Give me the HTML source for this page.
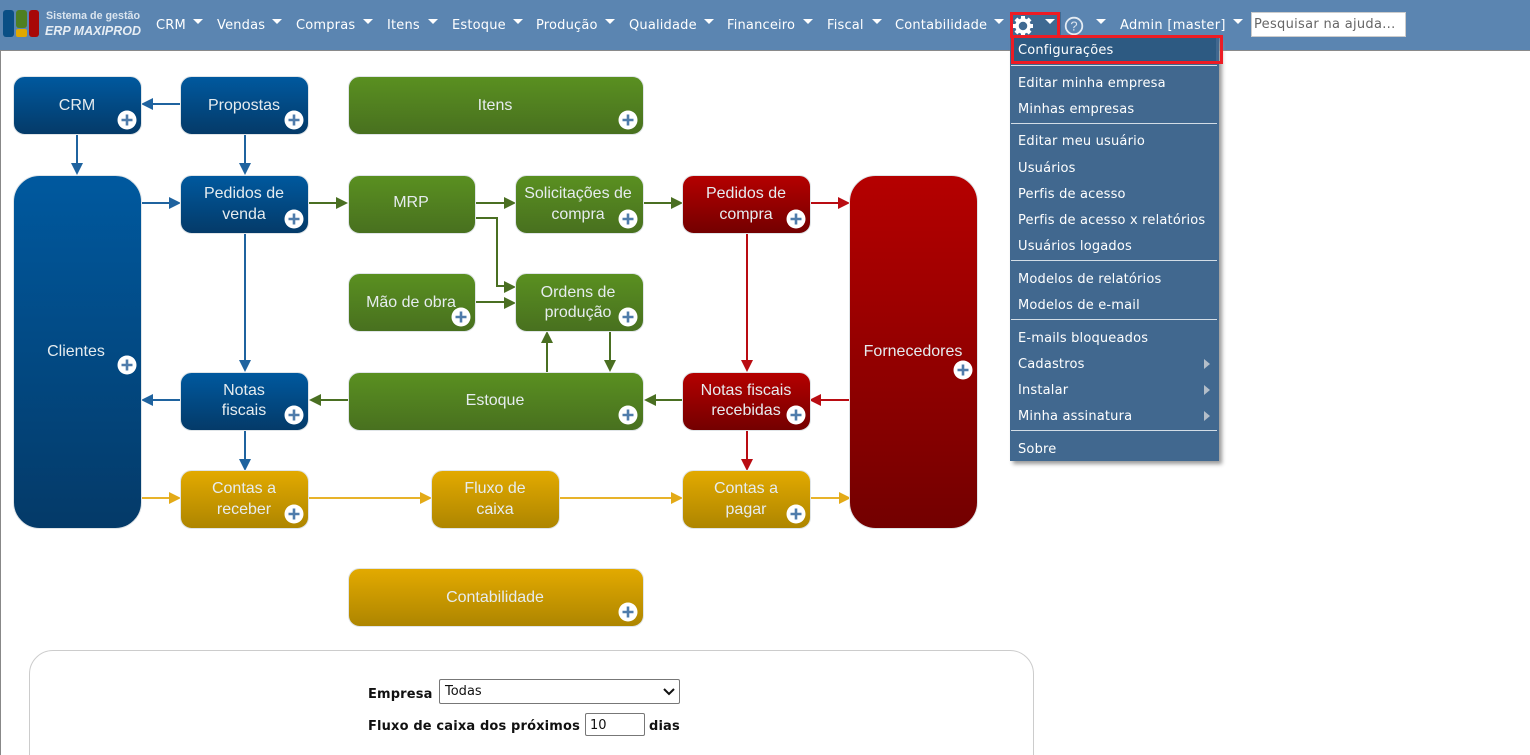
<!DOCTYPE html>
<html><head><meta charset="utf-8"><style>
html,body{margin:0;padding:0;width:1530px;height:755px;overflow:hidden;background:#fff;font-family:"DejaVu Sans",sans-serif}
#wrap{position:absolute;left:0;top:0;width:1530px;height:755px;overflow:hidden;background:#fff}
#left{position:absolute;left:0;top:51px;width:1px;height:704px;background:#888}
#bar{position:absolute;left:0;top:0;width:1530px;height:50px;background:#5b85b1;border-bottom:1px solid #8a8a8a}
.m{position:absolute;top:18px;font-size:13px;line-height:16px;color:#fff;white-space:nowrap;letter-spacing:.18px}
.t{position:absolute;top:19px;width:0;height:0;border-left:5.500px solid transparent;border-right:5.500px solid transparent;border-top:5.500px solid #fff}
#search{position:absolute;left:1251px;top:12px;width:155px;height:25px;background:#fff;border:1px solid #ccc;box-sizing:border-box;font-size:13px;line-height:23px;color:#666;padding-left:2px;white-space:nowrap;overflow:hidden;letter-spacing:.3px}
#gear{position:absolute;left:1010px;top:12px;width:51px;height:26px;background:#3f6a92}
#dd{position:absolute;left:1010px;top:38px;width:209px;height:423px;background:#41688f;box-shadow:3px 3px 4px #999}
#dd div.i{position:absolute;left:8px;font-size:13px;line-height:16px;color:#fff;white-space:nowrap;letter-spacing:.18px;margin-top:2px}
#dd hr{position:absolute;left:1px;width:206px;margin:0;border:0;height:1px;background:#d3dde6}
#sel{position:absolute;left:1011px;top:38px;width:205px;height:23px;background:#2d5a82}
.r{position:absolute;width:0;height:0;border-top:5px solid transparent;border-bottom:5px solid transparent;border-left:6px solid #b3bec9}
.red{position:absolute;border:3px solid #ed1c24;box-sizing:border-box}
#panel{position:absolute;left:29px;top:650px;width:1005px;height:140px;border:1px solid #ccc;border-radius:24px;box-sizing:border-box;background:#fff}
.l{position:absolute;font-size:13px;font-weight:bold;line-height:16px;color:#111;white-space:nowrap;letter-spacing:.15px}
#s{position:absolute;left:439px;top:679px;width:241px;height:25px;border:1px solid #777;border-radius:2px;box-sizing:border-box;background:#fff;font-size:13px;line-height:24px;padding-left:5px;color:#111}
#n{position:absolute;left:585px;top:713px;width:60px;height:23px;border:1px solid #777;border-radius:2px;box-sizing:border-box;font-size:13px;line-height:24px;padding-left:4px;color:#111}
svg text{font-family:"Liberation Sans",sans-serif;font-size:16px;fill:#e6ecef;text-anchor:middle}
</style></head><body><div id="wrap">
<svg width="1530" height="755" style="position:absolute;left:0;top:0">
<defs>
<linearGradient id="b" x1="0" y1="0" x2="0" y2="1"><stop offset="0" stop-color="#00599f"/><stop offset="1" stop-color="#043a68"/></linearGradient>
<linearGradient id="g" x1="0" y1="0" x2="0" y2="1"><stop offset="0" stop-color="#5a9020"/><stop offset="1" stop-color="#48701f"/></linearGradient>
<linearGradient id="r" x1="0" y1="0" x2="0" y2="1"><stop offset="0" stop-color="#b50000"/><stop offset="1" stop-color="#730000"/></linearGradient>
<linearGradient id="y" x1="0" y1="0" x2="0" y2="1"><stop offset="0" stop-color="#e3aa00"/><stop offset="1" stop-color="#ad8500"/></linearGradient>
<g id="p"><circle r="9.500" fill="#fff"/><path d="M-5.500 0H5.500M0-5.500V5.500" stroke="#4f7cab" stroke-width="2.600"/></g>
</defs>
<g fill="none" stroke-width="2">
<g stroke="#1f639f">
<path d="M181 104H153M77 135V164M245 135V164M142 203H170M245 234V360M181 400H153M245 430V459"/>
</g>
<g fill="#1f639f"><path d="M141 104l12-6v12zM77 175l-6-12h12zM245 175l-6-12h12zM181 203l-12-6v12zM245 372l-6-12h12zM141 400l12-6v12zM245 471l-6-12h12z"/></g>
<g stroke="#4a6f22">
<path d="M309 203H338M476 203H505M644 203H673M476 218H497V286H505M476 302H505M547 372V342M610 332V362M348 400H320M683 400H655"/>
</g>
<g fill="#4a6f22"><path d="M348 203l-12-6v12zM516 203l-12-6v12zM683 203l-12-6v12zM516 287l-12-6v12zM516 303l-12-6v12zM547 331l-6 12h12zM610 372l-6-12h12zM309 400l12-6v12zM644 400l12-6v12z"/></g>
<g stroke="#b90c12">
<path d="M811 203H840M747 234V360M850 400H820M747 430V459"/>
</g>
<g fill="#b90c12"><path d="M850 203l-12-6v12zM747 372l-6-12h12zM809 400l12-6v12zM747 471l-6-12h12z"/></g>
<g stroke="#e8b32a">
<path d="M142 498H170M309 498H421M560 498H672M811 498H840"/>
</g>
<g fill="#e3aa17"><path d="M181 498l-12-6v12zM432 498l-12-6v12zM683 498l-12-6v12zM851 498l-12-6v12z"/></g>
</g>
<g stroke="#e0e5e8" stroke-width="1">
<rect x="13.500" y="76.500" width="128" height="58" rx="11" fill="url(#b)"/>
<rect x="180.500" y="76.500" width="128" height="58" rx="11" fill="url(#b)"/>
<rect x="348.500" y="76.500" width="295" height="58" rx="11" fill="url(#g)"/>
<rect x="13.500" y="175.500" width="128" height="353" rx="26" fill="url(#b)"/>
<rect x="180.500" y="175.500" width="128" height="58" rx="11" fill="url(#b)"/>
<rect x="348.500" y="175.500" width="127" height="58" rx="11" fill="url(#g)"/>
<rect x="515.500" y="175.500" width="128" height="58" rx="11" fill="url(#g)"/>
<rect x="682.500" y="175.500" width="128" height="58" rx="11" fill="url(#r)"/>
<rect x="849.500" y="175.500" width="128" height="353" rx="26" fill="url(#r)"/>
<rect x="348.500" y="273.500" width="127" height="58" rx="11" fill="url(#g)"/>
<rect x="515.500" y="273.500" width="128" height="58" rx="11" fill="url(#g)"/>
<rect x="180.500" y="372.500" width="128" height="58" rx="11" fill="url(#b)"/>
<rect x="348.500" y="372.500" width="295" height="58" rx="11" fill="url(#g)"/>
<rect x="682.500" y="372.500" width="128" height="58" rx="11" fill="url(#r)"/>
<rect x="180.500" y="470.500" width="128" height="58" rx="11" fill="url(#y)"/>
<rect x="431.500" y="470.500" width="128" height="58" rx="11" fill="url(#y)"/>
<rect x="682.500" y="470.500" width="128" height="58" rx="11" fill="url(#y)"/>
<rect x="348.500" y="568.500" width="295" height="58" rx="11" fill="url(#y)"/>
</g>
<text x="77" y="110">CRM</text><text x="244" y="110">Propostas</text><text x="495" y="110">Itens</text>
<text x="76" y="356">Clientes</text>
<text x="244" y="198">Pedidos de</text><text x="244" y="219">venda</text>
<text x="411" y="207">MRP</text>
<text x="578" y="198">Solicitações de</text><text x="578" y="219">compra</text>
<text x="746" y="198">Pedidos de</text><text x="746" y="219">compra</text>
<text x="913" y="356">Fornecedores</text>
<text x="411" y="307">Mão de obra</text>
<text x="578" y="297">Ordens de</text><text x="578" y="317">produção</text>
<text x="244" y="395">Notas</text><text x="244" y="415">fiscais</text>
<text x="495" y="405">Estoque</text>
<text x="746" y="395">Notas fiscais</text><text x="746" y="415">recebidas</text>
<text x="244" y="493">Contas a</text><text x="244" y="514">receber</text>
<text x="495" y="493">Fluxo de</text><text x="495" y="514">caixa</text>
<text x="746" y="493">Contas a</text><text x="746" y="514">pagar</text>
<text x="495" y="602">Contabilidade</text>
<use href="#p" x="127" y="120"/><use href="#p" x="294" y="120"/><use href="#p" x="628" y="120"/>
<use href="#p" x="127" y="365"/><use href="#p" x="294" y="219"/><use href="#p" x="628" y="219"/>
<use href="#p" x="796" y="219"/><use href="#p" x="963" y="370"/><use href="#p" x="461" y="317"/>
<use href="#p" x="628" y="317"/><use href="#p" x="294" y="415"/><use href="#p" x="628" y="415"/>
<use href="#p" x="796" y="415"/><use href="#p" x="294" y="514"/><use href="#p" x="796" y="514"/>
<use href="#p" x="628" y="612"/>
</svg>
<div id="left"></div>
<div id="panel"></div>
<div class="l" style="left:368px;top:687px">Empresa</div>
<div id="s">Todas<svg width="12" height="8" style="position:absolute;left:223px;top:8px"><path d="M1 1l5 5 5-5" fill="none" stroke="#111" stroke-width="2"/></svg></div>
<div class="l" style="left:368px;top:719px">Fluxo de caixa dos próximos</div>
<div id="n">10</div>
<div class="l" style="left:649px;top:719px">dias</div>
<div id="bar"></div>
<svg width="145" height="40" style="position:absolute;left:0;top:5px">
<rect x="3" y="5" width="11" height="27" rx="3" fill="#0a4f85"/><rect x="16" y="5" width="11" height="18" rx="3" fill="#4f7f22"/><rect x="16" y="24" width="11" height="8" rx="2" fill="#e0a800"/><rect x="29" y="5" width="10" height="27" rx="3" fill="#a80808"/>
<text x="46" y="14" textLength="94" lengthAdjust="spacingAndGlyphs" style="font-size:11px;font-weight:bold;fill:#dbe5ef;text-anchor:start">Sistema de gestão</text>
<text x="45" y="30" textLength="96" lengthAdjust="spacingAndGlyphs" style="font-size:13px;font-weight:bold;font-style:italic;fill:#e6edf4;text-anchor:start">ERP MAXIPROD</text>
</svg>
<div class="m" style="left:156px">CRM</div><div class="t" style="left:193px"></div>
<div class="m" style="left:217px">Vendas</div><div class="t" style="left:272px"></div>
<div class="m" style="left:296px">Compras</div><div class="t" style="left:363px"></div>
<div class="m" style="left:387px">Itens</div><div class="t" style="left:428px"></div>
<div class="m" style="left:452px">Estoque</div><div class="t" style="left:513px"></div>
<div class="m" style="left:536px">Produção</div><div class="t" style="left:605px"></div>
<div class="m" style="left:629px">Qualidade</div><div class="t" style="left:704px"></div>
<div class="m" style="left:727px">Financeiro</div><div class="t" style="left:803px"></div>
<div class="m" style="left:827px">Fiscal</div><div class="t" style="left:872px"></div>
<div class="m" style="left:895px">Contabilidade</div><div class="t" style="left:994px"></div>
<div id="gear"></div>
<svg width="22" height="22" viewBox="-11 -11 22 22" style="position:absolute;left:1012px;top:15px"><g fill="#fff"><circle r="6" fill="none" stroke="#fff" stroke-width="3.500"/><g><rect x="-2" y="-10" width="4" height="5"/><rect x="-2" y="5" width="4" height="5"/><rect x="-10" y="-2" width="5" height="4"/><rect x="5" y="-2" width="5" height="4"/></g><g transform="rotate(45)"><rect x="-2" y="-10" width="4" height="5"/><rect x="-2" y="5" width="4" height="5"/><rect x="-10" y="-2" width="5" height="4"/><rect x="5" y="-2" width="5" height="4"/></g></g></svg>
<div class="t" style="left:1045px"></div>
<svg width="20" height="20" style="position:absolute;left:1064px;top:16px"><circle cx="10" cy="10" r="8.300" fill="none" stroke="#e4ebf2" stroke-width="1.800"/><text x="10" y="14.500" style="font-size:13px;fill:#dfe6ee">?</text></svg>
<div class="t" style="left:1096px"></div>
<div class="m" style="left:1120px;letter-spacing:.3px">Admin [master]</div><div class="t" style="left:1233px"></div>
<div id="search">Pesquisar na ajuda...</div>
<div id="dd">
<hr style="top:27px"><hr style="top:85px"><hr style="top:222px"><hr style="top:281px"><hr style="top:392px">
<div class="i" style="top:36px">Editar minha empresa</div>
<div class="i" style="top:62px">Minhas empresas</div>
<div class="i" style="top:94px">Editar meu usuário</div>
<div class="i" style="top:121px">Usuários</div>
<div class="i" style="top:147px">Perfis de acesso</div>
<div class="i" style="top:173px">Perfis de acesso x relatórios</div>
<div class="i" style="top:199px">Usuários logados</div>
<div class="i" style="top:232px">Modelos de relatórios</div>
<div class="i" style="top:258px">Modelos de e-mail</div>
<div class="i" style="top:291px">E-mails bloqueados</div>
<div class="i" style="top:317px">Cadastros</div>
<div class="i" style="top:343px">Instalar</div>
<div class="i" style="top:369px">Minha assinatura</div>
<div class="i" style="top:402px">Sobre</div>
<div class="r" style="left:194px;top:321px"></div><div class="r" style="left:194px;top:347px"></div><div class="r" style="left:194px;top:373px"></div>
</div>
<div id="sel"></div>
<div class="m" style="left:1018px;top:43px">Configurações</div>
<div class="red" style="left:1010px;top:12px;width:50px;height:26px"></div>
<div class="red" style="left:1011px;top:35px;width:212px;height:29px"></div>
</div></body></html>
